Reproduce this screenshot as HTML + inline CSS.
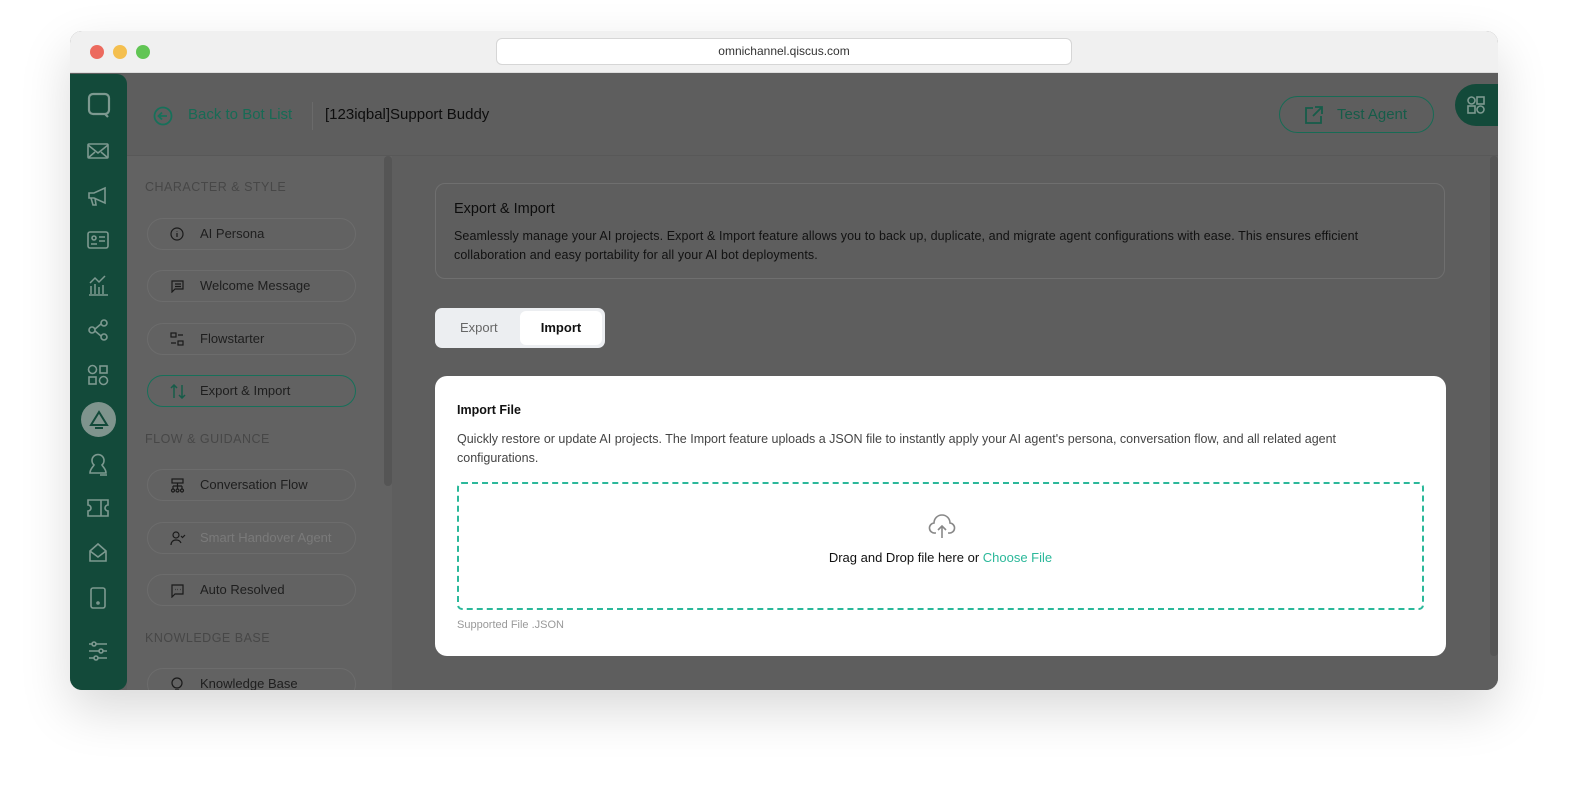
<!DOCTYPE html>
<html><head><meta charset="utf-8"><style>
*{box-sizing:border-box;margin:0;padding:0}
body{width:1580px;height:804px;background:#fff;font-family:"Liberation Sans",sans-serif;position:relative;overflow:hidden}
.win{position:absolute;left:70px;top:31px;width:1428px;height:659px;border-radius:12px;overflow:hidden;box-shadow:0 20px 50px rgba(0,0,0,.15);background:#5e5e5e}
.tb{position:absolute;left:0;top:0;width:100%;height:42px;background:#f0f0f0;border-bottom:1px solid #ddd}
.dot{position:absolute;top:14px;width:14px;height:14px;border-radius:50%}
.url{position:absolute;left:426px;top:7px;width:576px;height:27px;background:#fff;border:1px solid #d6d6d6;border-radius:6px;font-size:12px;color:#333;text-align:center;line-height:25px}
.side{position:absolute;left:0;top:43px;width:57px;height:616px;background:#134a3a;border-radius:0 10px 10px 0}
.side svg{position:absolute;left:17px}
.hdr{position:absolute;left:57px;top:43px;right:0;height:82px;border-bottom:1px solid #585858}
.lp{position:absolute;left:57px;top:125px;width:265px;bottom:0;background:#626262}
.sec{position:absolute;left:18px;font-size:12.5px;letter-spacing:.5px;color:#474747}
.it{position:absolute;left:20px;width:209px;height:32px;border:1px solid #6c6c6c;border-radius:16px;font-size:13px;color:#1e1e1e;line-height:30px;padding-left:52px}
.it svg{position:absolute;left:22px;top:8px}
.main{position:absolute;left:322px;top:125px;right:0;bottom:0;background:#5e5e5e}
</style></head><body>
<div class="win">
<div class="tb">
<div class="dot" style="left:20px;background:#ec6a5e"></div>
<div class="dot" style="left:43px;background:#f4bf4f"></div>
<div class="dot" style="left:66px;background:#61c554"></div>
<div class="url">omnichannel.qiscus.com</div>
</div>
<div class="side">
<svg style="top:18px" width="24" height="26" viewBox="0 0 24 26" fill="none" stroke="#7d9990" stroke-width="2.2"><path d="M6 2h12a4 4 0 0 1 4 4v12a4 4 0 0 1-4 4H6a4 4 0 0 1-4-4V6a4 4 0 0 1 4-4zM18 22l3 3"/></svg>
<svg style="top:68px" width="22" height="18" viewBox="0 0 22 18" fill="none" stroke="#7d9990" stroke-width="1.6"><rect x="1" y="2" width="20" height="14" rx="1"/><path d="M1 3l10 8 10-8M1 16l7-6M21 16l-7-6"/></svg>
<svg style="top:112px" width="22" height="20" viewBox="0 0 22 20" fill="none" stroke="#7d9990" stroke-width="1.6"><path d="M2 7h5l11-5v15L7 12H2zM4 12l2 7h3l-1-7"/></svg>
<svg style="top:157px" width="22" height="18" viewBox="0 0 22 18" fill="none" stroke="#7d9990" stroke-width="1.6"><rect x="1" y="1" width="20" height="16" rx="2"/><circle cx="7" cy="7" r="2"/><path d="M4 13h6M12 6h6M12 10h6"/></svg>
<svg style="top:200px" width="22" height="22" viewBox="0 0 22 22" fill="none" stroke="#7d9990" stroke-width="1.5"><path d="M2 21h19M4 20v-8M8 20v-10M12 20v-7M16 20v-9M3 9l5-5 4 4 6-6"/></svg>
<svg style="top:245px" width="22" height="22" viewBox="0 0 22 22" fill="none" stroke="#7d9990" stroke-width="1.6"><circle cx="5" cy="11" r="3"/><circle cx="17" cy="4" r="3"/><circle cx="17" cy="18" r="3"/><path d="M8 10l6-5M8 12l6 5"/></svg>
<svg style="top:290px" width="22" height="22" viewBox="0 0 22 22" fill="none" stroke="#7d9990" stroke-width="1.6"><circle cx="5.5" cy="5.5" r="4"/><rect x="13" y="2" width="7" height="7"/><rect x="2" y="13" width="7" height="7"/><circle cx="16.5" cy="16.5" r="4"/></svg>
<div style="position:absolute;left:11px;top:328px;width:35px;height:35px;border-radius:50%;background:#7f948d"></div>
<svg style="top:336px;left:18px" width="22" height="20" viewBox="0 0 22 20" fill="none" stroke="#134a3a" stroke-width="2"><path d="M11 2l8 13H3zM7 18h8"/></svg>
<svg style="top:379px" width="22" height="24" viewBox="0 0 22 24" fill="none" stroke="#7d9990" stroke-width="1.6"><path d="M3 20c0-4 3-6 4-8a6 6 0 1 1 8 0c1 2 4 4 4 8H3zM13 22h7"/></svg>
<svg style="top:425px" width="22" height="18" viewBox="0 0 22 18" fill="none" stroke="#7d9990" stroke-width="1.6"><path d="M1 1h20v5a3 3 0 0 0 0 6v5H1v-5a3 3 0 0 0 0-6zM14 1v16"/></svg>
<svg style="top:468px" width="22" height="22" viewBox="0 0 22 22" fill="none" stroke="#7d9990" stroke-width="1.6"><path d="M3 9v10h16V9l-8-7zM3 9l8 6 8-6"/></svg>
<svg style="top:512px" width="22" height="24" viewBox="0 0 22 24" fill="none" stroke="#7d9990" stroke-width="1.6"><rect x="4" y="2" width="14" height="20" rx="2"/><circle cx="11" cy="17" r="1"/></svg>
<svg style="top:566px" width="22" height="22" viewBox="0 0 22 22" fill="none" stroke="#7d9990" stroke-width="1.6"><path d="M2 4h18M2 11h18M2 18h18"/><circle cx="7" cy="4" r="2" fill="#134a3a"/><circle cx="14" cy="11" r="2" fill="#134a3a"/><circle cx="9" cy="18" r="2" fill="#134a3a"/></svg>
</div>
<div class="hdr">
<svg style="position:absolute;left:26px;top:32px" width="20" height="20" viewBox="0 0 20 20" fill="none" stroke="#17705a" stroke-width="1.8"><circle cx="10" cy="10" r="8.5"/><path d="M14 10H6M9 6.5L5.5 10 9 13.5"/></svg>
<div style="position:absolute;left:61px;top:32px;font-size:15px;color:#176b55">Back to Bot List</div>
<div style="position:absolute;left:185px;top:28px;width:1px;height:28px;background:#6a6a6a"></div>
<div style="position:absolute;left:198px;top:32px;font-size:15px;color:#0d0d0d">[123iqbal]Support Buddy</div>
<div style="position:absolute;left:1152px;top:22px;width:155px;height:37px;border:1px solid #176b55;border-radius:19px;font-size:15px;color:#165c49;line-height:35px;padding-left:57px">Test Agent
<svg style="position:absolute;left:24px;top:8px" width="20" height="20" viewBox="0 0 20 20" fill="none" stroke="#165c49" stroke-width="1.8"><path d="M9 3H2v15h15v-7M11 2h7v7M18 2l-9 9"/></svg></div>
<div style="position:absolute;left:1328px;top:10px;width:50px;height:42px;border-radius:21px 0 0 21px;background:#134a3a"></div>
<svg style="position:absolute;left:1340px;top:22px" width="18" height="18" viewBox="0 0 18 18" fill="none" stroke="#7d9990" stroke-width="1.6"><circle cx="4.5" cy="4.5" r="3.5"/><rect x="10" y="1" width="7" height="7"/><rect x="1" y="10" width="7" height="7"/><circle cx="13.5" cy="13.5" r="3.5"/></svg>
</div>
<div class="lp">
<div style="position:absolute;right:0;top:0;width:8px;height:330px;background:#555;border-radius:4px"></div>
<div class="sec" style="top:24px">CHARACTER &amp; STYLE</div>
<div class="it" style="top:62px"><svg width="14" height="14" viewBox="0 0 14 14" fill="none" stroke="#1a1a1a" stroke-width="1.2"><circle cx="7" cy="7" r="6"/><path d="M7 6v4M7 4v.5"/></svg>AI Persona</div>
<div class="it" style="top:114px"><svg width="15" height="14" viewBox="0 0 15 14" fill="none" stroke="#1a1a1a" stroke-width="1.2"><path d="M2 2h11v8H5l-3 3z M5 5h6M5 7.5h6"/></svg>Welcome Message</div>
<div class="it" style="top:167px"><svg width="15" height="15" viewBox="0 0 15 15" fill="none" stroke="#1a1a1a" stroke-width="1.2"><rect x="1" y="1" width="5" height="4"/><rect x="8" y="9" width="5" height="4"/><path d="M8 3h5M1 11h5"/></svg>Flowstarter</div>
<div class="it" style="top:219px;border-color:#17705a"><svg width="16" height="15" viewBox="0 0 16 15" fill="none" stroke="#165c49" stroke-width="1.5"><path d="M4 14V1M1 4l3-3 3 3M12 1v13M9 11l3 3 3-3"/></svg>Export &amp; Import</div>
<div class="sec" style="top:276px">FLOW &amp; GUIDANCE</div>
<div class="it" style="top:313px"><svg width="15" height="15" viewBox="0 0 15 15" fill="none" stroke="#1a1a1a" stroke-width="1.2"><rect x="2" y="1" width="11" height="4"/><path d="M7.5 5v3M3 8h9M3 8v3M7.5 8v3M12 8v3"/><circle cx="3" cy="12.5" r="1.5"/><circle cx="7.5" cy="12.5" r="1.5"/><circle cx="12" cy="12.5" r="1.5"/></svg>Conversation Flow</div>
<div class="it" style="top:366px;color:#7a7a7a"><svg width="16" height="15" viewBox="0 0 16 15" fill="none" stroke="#1a1a1a" stroke-width="1.2"><circle cx="6" cy="4" r="3"/><path d="M1 14c0-3 2-5 5-5s4 1 5 3M11 5l1.5 1.5L15 4"/></svg>Smart Handover Agent</div>
<div class="it" style="top:418px"><svg width="15" height="15" viewBox="0 0 15 15" fill="none" stroke="#1a1a1a" stroke-width="1.2"><path d="M2 2h11v9H5l-3 3z"/><path d="M5 6.5h.5M7.5 6.5h.5M10 6.5h.5"/></svg>Auto Resolved</div>
<div class="sec" style="top:475px">KNOWLEDGE BASE</div>
<div class="it" style="top:512px"><svg width="14" height="14" viewBox="0 0 14 14" fill="none" stroke="#1a1a1a" stroke-width="1.2"><circle cx="7" cy="6" r="5"/><path d="M5 13h4"/></svg>Knowledge Base</div>
</div>
<div class="main">
<div style="position:absolute;right:0;top:0;width:8px;height:500px;background:#555;border-radius:4px"></div>
<div style="position:absolute;left:43px;top:27px;width:1010px;height:96px;border:1px solid #6f6f6f;border-radius:10px;padding:17px 18px">
<div style="font-size:14.5px;color:#0d0d0d;margin-bottom:10px">Export &amp; Import</div>
<div style="font-size:12.5px;color:#111;line-height:19px;letter-spacing:.1px">Seamlessly manage your AI projects. Export &amp; Import feature allows you to back up, duplicate, and migrate agent configurations with ease. This ensures efficient collaboration and easy portability for all your AI bot deployments.</div>
</div>
<div style="position:absolute;left:43px;top:152px;width:170px;height:40px;background:#eceef1;border-radius:7px">
<div style="position:absolute;left:25px;top:12px;font-size:13px;color:#666">Export</div>
<div style="position:absolute;left:85px;top:3px;width:82px;height:34px;background:#fff;border-radius:6px;font-size:13px;font-weight:bold;color:#111;text-align:center;line-height:34px">Import</div>
</div>
<div style="position:absolute;left:43px;top:220px;width:1011px;height:280px;background:#fff;border-radius:12px">
<div style="position:absolute;left:22px;top:27px;font-size:12.5px;font-weight:bold;color:#111">Import File</div>
<div style="position:absolute;left:22px;top:54px;width:960px;font-size:12.5px;color:#444;line-height:19px">Quickly restore or update AI projects. The Import feature uploads a JSON file to instantly apply your AI agent's persona, conversation flow, and all related agent configurations.</div>
<div style="position:absolute;left:22px;top:106px;width:967px;height:128px;border:2px dashed #2bb89a;border-radius:5px">
<svg style="position:absolute;left:469px;top:30px" width="28" height="26" viewBox="0 0 28 26" fill="none" stroke="#888" stroke-width="1.6"><path d="M8 19H7a5 5 0 0 1-1-10 8 8 0 0 1 16 0 5 5 0 0 1-1 10h-1M14 12v12M10 16l4-4 4 4"/></svg>
<div style="position:absolute;left:0;right:0;top:66px;text-align:center;font-size:13px;color:#111">Drag and Drop file here or <span style="color:#2bb89a">Choose File</span></div>
</div>
<div style="position:absolute;left:22px;top:243px;font-size:11px;color:#999">Supported File .JSON</div>
</div>
<div style="position:absolute;left:902px;top:545px;width:128px;height:40px;background:#646464;border-radius:20px;font-size:13px;color:#565656;text-align:center;line-height:36px">Import File</div>
</div>
</div>
</body></html>
